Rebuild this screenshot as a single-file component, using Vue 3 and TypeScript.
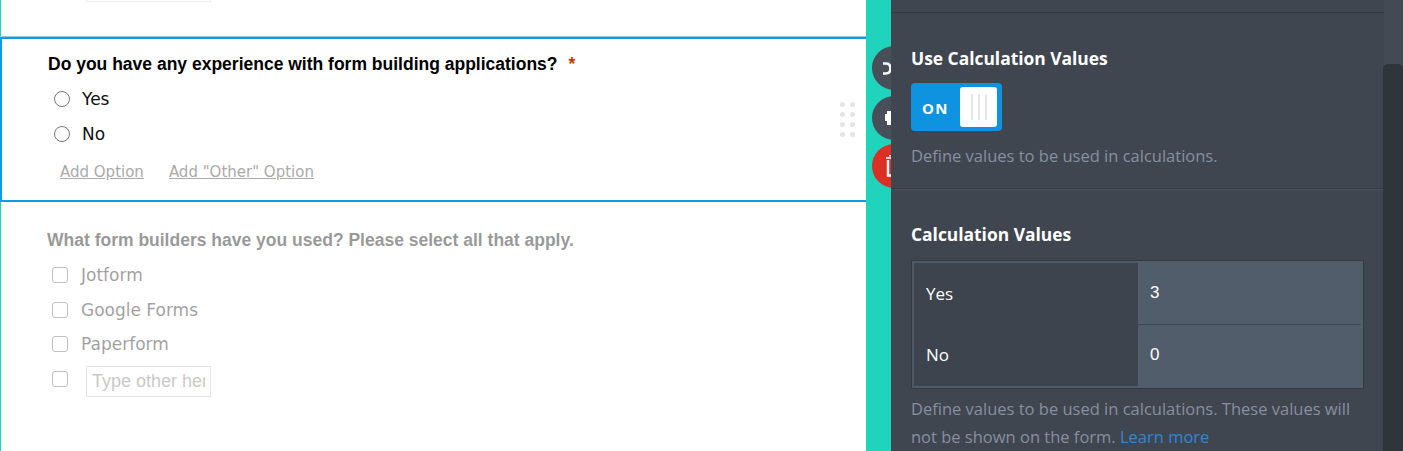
<template>
  <div class="page">
    <div class="form-area">
      <div class="stub"><span class="stub-input"></span></div>

      <section class="question active">
        <div class="q-title">
          Do you have any experience with form building applications?
          <span class="req">*</span>
        </div>
        <label v-for="opt in radioOptions" :key="opt" class="radio-row">
          <span class="radio"></span>
          <span>{{ opt }}</span>
        </label>
        <div class="add-links">
          <a>Add Option</a>
          <a>Add "Other" Option</a>
        </div>
        <div class="grip">
          <span v-for="n in 8" :key="n"></span>
        </div>
      </section>

      <section class="question faded">
        <div class="q-title">What form builders have you used? Please select all that apply.</div>
        <label v-for="opt in checkOptions" :key="opt" class="check-row">
          <span class="check"></span>
          <span>{{ opt }}</span>
        </label>
        <div class="check-row other">
          <span class="check"></span>
          <input class="other-input" placeholder="Type other here" readonly />
        </div>
      </section>
    </div>

    <div class="teal-strip">
      <div class="tool-btn dark">
        <svg width="8" height="13" viewBox="0 0 8 13"><path d="M0 1.5h3c3 0 4.5 2 4.5 5s-1.5 5-4.5 5H0" fill="none" stroke="#fff" stroke-width="2.6" /></svg>
      </div>
      <div class="tool-btn dark">
        <svg width="8" height="14" viewBox="0 0 8 14"><path d="M4 0h4v14H4zM2 3h2v7H2z" fill="#fff" /></svg>
      </div>
      <div class="tool-btn red">
        <svg width="8" height="22" viewBox="0 0 8 22">
          <path d="M6 .7h2M3 3h5" stroke="#fff" stroke-width="1.5" fill="none" />
          <path d="M5 5v15.5h3" stroke="#fff" stroke-width="2.4" fill="none" />
        </svg>
      </div>
    </div>

    <aside class="panel">
      <div class="panel-inner">
        <div class="top-strip"></div>

        <div class="field field-toggle">
          <h3>Use Calculation Values</h3>
          <div class="toggle">
            <span class="toggle-label">ON</span>
            <span class="knob"><i></i><i></i><i></i></span>
          </div>
          <p class="hint">Define values to be used in calculations.</p>
        </div>

        <div class="field field-values">
          <h3>Calculation Values</h3>
          <div class="calc-table">
            <div class="calc-names">
              <div v-for="row in calcRows" :key="row.name" class="calc-name">{{ row.name }}</div>
            </div>
            <div class="calc-nums">
              <div v-for="row in calcRows" :key="row.name" class="calc-num">{{ row.value }}</div>
            </div>
          </div>
          <p class="hint hint-long">
            Define values to be used in calculations. These values will not be shown on the form.
            <a>Learn more</a>
          </p>
        </div>
      </div>
      <div class="scroll-track"><div class="scroll-thumb"></div></div>
    </aside>
  </div>
</template>

<script setup lang="ts">
interface CalcRow {
  name: string
  value: number
}

const radioOptions: string[] = ['Yes', 'No']
const checkOptions: string[] = ['Jotform', 'Google Forms', 'Paperform']
const calcRows: CalcRow[] = [
  { name: 'Yes', value: 3 },
  { name: 'No', value: 0 }
]
</script>

<style>
html,
body {
  margin: 0;
  height: 451px;
  overflow: hidden;
  background: #fff;
}
</style>

<style scoped>
.page {
  display: flex;
  width: 1403px;
  height: 451px;
  overflow: hidden;
}

.form-area {
  width: 866px;
  height: 451px;
  flex: none;
  background: #fff;
  border-left: 1px solid #1fd3bc;
  box-sizing: border-box;
}

.stub {
  height: 37px;
  padding-left: 85px;
  box-sizing: border-box;
}

.stub-input {
  display: block;
  width: 125px;
  height: 2px;
  box-sizing: border-box;
  border: 1px solid #eee;
  border-top: 0;
}

.question {
  position: relative;
  box-sizing: border-box;
}

.question.active {
  height: 165px;
  margin-left: -1px;
  margin-right: -2px;
  border: 2px solid #0f9ae6;
  padding: 13px 0 0 46px;
  box-shadow: 0 -1px 0 #8fcdf0;
}

.question.active .q-title {
  margin-bottom: 5px;
}

.question.faded {
  padding: 26px 0 0 46px;
  opacity: 0.4;
}

.question.faded .q-title {
  margin-bottom: 6px;
}

.q-title {
  font: bold 17.5px/24px "Liberation Sans", Arial, sans-serif;
  color: #000;
}

.req {
  color: #c13b00;
  margin-left: 6px;
}

.radio-row {
  display: flex;
  align-items: center;
  height: 35px;
  padding-left: 6px;
  font: 17px/24px "DejaVu Sans", sans-serif;
  color: #111;
}

.radio {
  width: 14px;
  height: 14px;
  border: 1px solid #777;
  border-radius: 50%;
  margin-right: 12px;
}

.add-links {
  display: flex;
  gap: 25px;
  padding: 11px 0 0 12px;
  font: 15px/20px "DejaVu Sans", sans-serif;
  color: #aaa;
}

.add-links a {
  text-decoration: underline;
}

.grip {
  position: absolute;
  top: 63px;
  right: 11px;
  display: grid;
  grid-template-columns: 5px 5px;
  gap: 5px;
}

.grip span {
  width: 5px;
  height: 5px;
  border-radius: 50%;
  background: #e4e4e4;
}

.check-row {
  display: flex;
  align-items: center;
  height: 34.5px;
  padding-left: 5px;
  font: 17px/24px "DejaVu Sans", sans-serif;
  color: #111;
}

.check {
  width: 14px;
  height: 14px;
  border: 1px solid #666;
  border-radius: 3px;
  margin-right: 13px;
}

.other {
  margin-top: 4px;
  align-items: flex-start;
}

.other .check {
  margin-top: 5px;
}

.other-input {
  width: 125px;
  height: 31px;
  box-sizing: border-box;
  border: 1px solid #bbb;
  border-radius: 0;
  outline: none;
  margin: 0 0 0 5px;
  padding: 0 5px;
  background: #fff;
  font: 18px "Liberation Sans", Arial, sans-serif;
}

.other-input::placeholder {
  color: #777;
  opacity: 1;
}

.teal-strip {
  position: relative;
  width: 25px;
  flex: none;
  background: #1fd3bc;
}

.tool-btn {
  position: absolute;
  left: 6px;
  width: 44px;
  height: 44px;
  border-radius: 50%;
  display: flex;
  align-items: center;
  padding-left: 11px;
  box-sizing: border-box;
}

.tool-btn.dark {
  background: #484f59;
}

.tool-btn:nth-child(1) {
  top: 46px;
}

.tool-btn:nth-child(2) {
  top: 96px;
}

.tool-btn.red {
  top: 144px;
  background: #dc3025;
}

.panel {
  position: relative;
  z-index: 1;
  flex: 1;
  display: flex;
  background: #40464f;
}

.panel-inner {
  width: 493px;
  flex: none;
}

.top-strip {
  height: 13px;
  box-sizing: border-box;
  border-bottom: 1px solid #353a43;
}

.field {
  box-sizing: border-box;
  padding-left: 20px;
  border-bottom: 1px solid #353a43;
  box-shadow: 0 1px 0 #4a505a;
}

.field-toggle {
  height: 176px;
  padding-top: 33px;
}

.field-values {
  padding-top: 33px;
  border-bottom: 0;
  box-shadow: none;
}

h3 {
  margin: 0;
  font: 700 17.4px/24px "Open Sans", sans-serif;
  color: #fff;
}

.toggle {
  position: relative;
  width: 91px;
  height: 48px;
  margin-top: 13px;
  background: #0e93e0;
  border-radius: 4px;
}

.toggle-label {
  position: absolute;
  left: 11px;
  top: 14px;
  font: 700 15px/22px "Open Sans", sans-serif;
  letter-spacing: 1.2px;
  color: #fff;
}

.knob {
  position: absolute;
  right: 5px;
  top: 4px;
  width: 37px;
  height: 40px;
  border-radius: 3px;
  background: #fff;
  display: flex;
  justify-content: center;
  gap: 5px;
  padding: 7px 0;
  box-sizing: border-box;
}

.knob i {
  width: 2px;
  background: #e6e6e6;
}

.hint {
  margin: 13px 0 0;
  font: 16.5px/24px "Open Sans", sans-serif;
  color: #868fa0;
}

.hint a {
  color: #2f86d4;
}

.hint-long {
  margin-top: 6px;
  width: 450px;
  line-height: 28px;
}

.calc-table {
  display: flex;
  width: 453px;
  height: 129px;
  margin-top: 14px;
  box-sizing: border-box;
  border: 1px solid #343942;
  background: #525d6c;
}

.calc-names {
  width: 226px;
  flex: none;
  box-sizing: border-box;
  background: #3e444e;
  border: 2px solid #4f5a68;
  border-right: 0;
}

.calc-name {
  height: 61px;
  padding: 19px 0 0 12px;
  box-sizing: border-box;
  font: 17px/24px "Open Sans", sans-serif;
  color: #fff;
}

.calc-nums {
  flex: 1;
  padding-right: 2px;
}

.calc-num {
  height: 63px;
  box-sizing: border-box;
  padding: 18px 0 0 12px;
  font: 17px/24px "Liberation Sans", Arial, sans-serif;
  color: #fff;
}

.calc-num:first-child {
  height: 64px;
  padding-top: 20px;
  border-bottom: 1px solid #3f4650;
}

.scroll-track {
  position: relative;
  flex: 1;
  background: #444a54;
}

.scroll-thumb {
  position: absolute;
  top: 64px;
  left: -1px;
  right: 0;
  bottom: 0;
  background: #30343b;
  border-radius: 5px 5px 0 0;
}
</style>
